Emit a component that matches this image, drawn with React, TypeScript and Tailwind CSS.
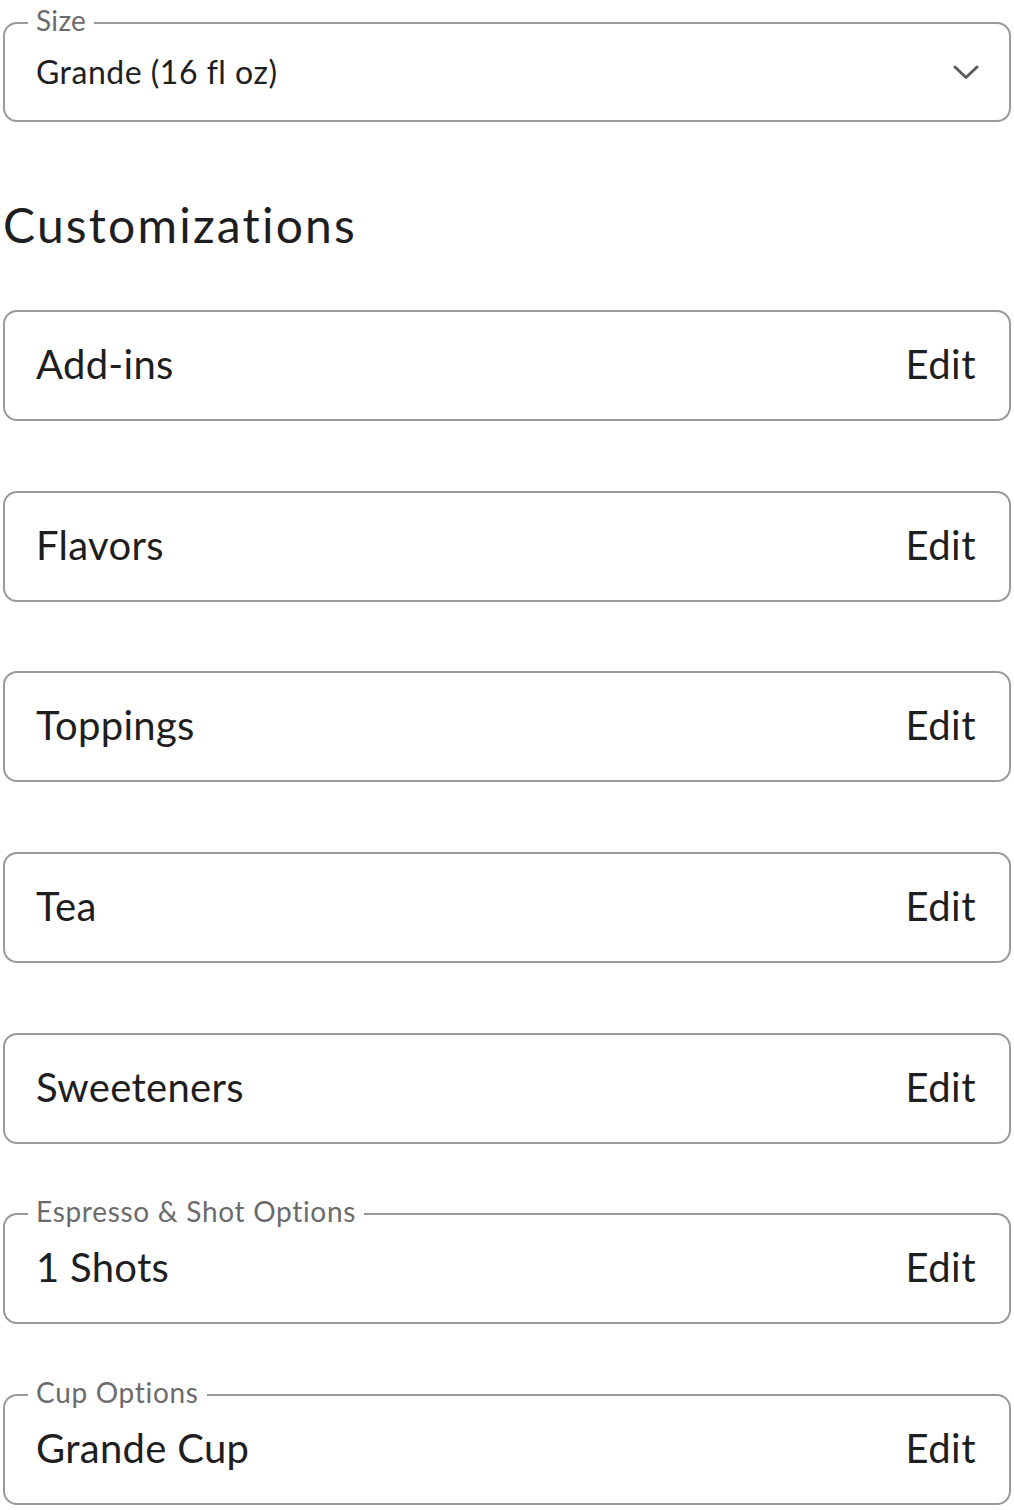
import React from "react";

const font = { fontFamily: "Lato, 'Noto Sans', sans-serif" };

function Row({ label, legend }: { label: string; legend?: string }) {
  return (
    <div className="relative flex h-[111px] items-center justify-between rounded-[14px] border-2 border-[#9a9a9a] pb-[3px] pl-[31px] pr-[33px]">
      {legend && (
        <span className="absolute left-[23px] top-[-22px] bg-white px-[8px] text-[28px] leading-[36px] tracking-[0.7px] text-[#6b6b6b]">
          {legend}
        </span>
      )}
      <span className="text-[40px] leading-none tracking-[0.3px] text-[#1e1e1e]">{label}</span>
      <span className="text-[40px] leading-none tracking-[0.5px] text-[#1e1e1e]">Edit</span>
    </div>
  );
}

export default function App() {
  return (
    <div className="min-h-[1510px] bg-white px-[3px] pt-[22px] [font-variant-ligatures:none]" style={font}>
      <div className="relative flex h-[100px] items-center justify-between rounded-[14px] border-2 border-[#9a9a9a] pl-[31px] pr-[30px]">
        <span className="absolute left-[23px] top-[-22px] bg-white px-[8px] text-[28px] leading-[36px] tracking-[0.3px] text-[#6b6b6b]">
          Size
        </span>
        <span className="text-[32px] leading-none tracking-[0.5px] text-[#1e1e1e]">Grande (16 fl oz)</span>
        <svg width="26" height="15" viewBox="0 0 26 15" fill="none">
          <path d="M2 2 L13 12.5 L24 2" stroke="#5c5c5c" strokeWidth="3" strokeLinecap="round" strokeLinejoin="round" />
        </svg>
      </div>
      <h2 className="mt-[79px] text-[48px] font-normal leading-[48px] tracking-[2.2px] text-[#1e1e1e]">Customizations</h2>
      <div className="mt-[61px] flex flex-col gap-[69.7px]">
        <Row label="Add-ins" />
        <Row label="Flavors" />
        <Row label="Toppings" />
        <Row label="Tea" />
        <Row label="Sweeteners" />
        <Row label="1 Shots" legend="Espresso & Shot Options" />
        <Row label="Grande Cup" legend="Cup Options" />
      </div>
    </div>
  );
}
